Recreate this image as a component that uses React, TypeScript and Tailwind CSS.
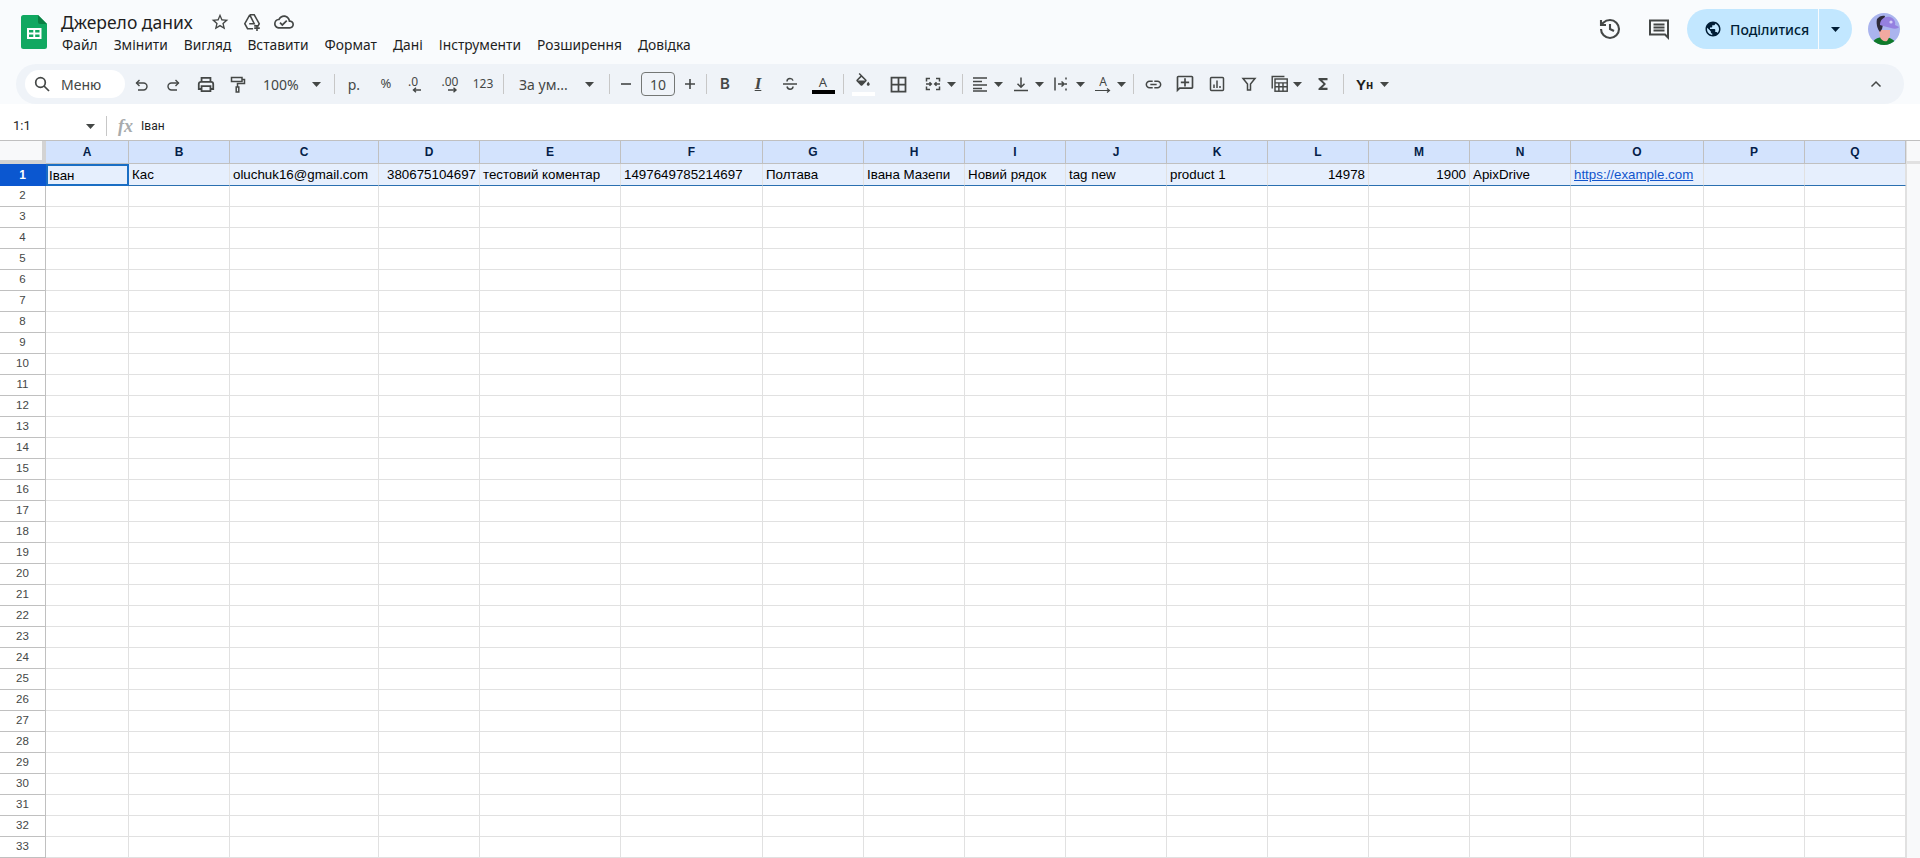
import React from "react";

const INK = "#444746";

function Caret({ color = INK }: { color?: string }) {
  return (
    <svg width="9" height="5" viewBox="0 0 9 5" className="shrink-0">
      <path d="M0 0h9L4.5 5z" fill={color} />
    </svg>
  );
}

function Ico({ d, size = 18, vb = 24 }: { d: string; size?: number; vb?: number }) {
  return (
    <svg width={size} height={size} viewBox={`0 0 ${vb} ${vb}`} className="shrink-0">
      <path d={d} fill={INK} />
    </svg>
  );
}

function Line({ children, size = 18, sw = 1.6 }: { children: React.ReactNode; size?: number; sw?: number }) {
  return (
    <svg width={size} height={size} viewBox="0 0 18 18" fill="none" stroke={INK} strokeWidth={sw} className="shrink-0">
      {children}
    </svg>
  );
}

function Sep({ className }: { className: string }) {
  return (
    <div className={`flex justify-center shrink-0 ${className}`}>
      <div className="w-px h-[20px] bg-[#c7c7c7]" />
    </div>
  );
}

function Slot({ className, children }: { className: string; children?: React.ReactNode }) {
  return <div className={`flex items-center justify-center shrink-0 h-full ${className}`}>{children}</div>;
}

function Logo() {
  return (
    <svg width="26" height="34" viewBox="0 0 26 34" className="shrink-0">
      <path d="M2.5 0H17l9 9v22.5a2.5 2.5 0 0 1-2.5 2.5h-21A2.5 2.5 0 0 1 0 31.5v-29A2.5 2.5 0 0 1 2.5 0z" fill="#11a861" />
      <path d="M17 0l9 9h-7a2 2 0 0 1-2-2z" fill="#0a8043" />
      <path d="M6 13h14.5v11H6z" fill="#fff" />
      <path d="M8 15h4.3v2.6H8zM14.2 15h4.3v2.6h-4.3zM8 19.4h4.3V22H8zM14.2 19.4h4.3V22h-4.3z" fill="#11a861" />
    </svg>
  );
}

function Avatar() {
  return (
    <svg width="32" height="32" viewBox="0 0 32 32" className="shrink-0">
      <defs>
        <clipPath id="av"><circle cx="16" cy="16" r="16" /></clipPath>
      </defs>
      <g clipPath="url(#av)">
        <rect width="32" height="32" fill="#aab4ee" />
        <path d="M4 32c1-6 6-8 12-8s11 3 13 8z" fill="#0f7a2a" />
        <path d="M11 17h11v6l-3 5c-3 1-6-1-7-4z" fill="#f2a9a0" />
        <path d="M9 6c2-3 6-4 8-3l-3 13-2 3c-3-3-4-9-3-13z" fill="#2e2a3a" />
        <path d="M12 12c0-6 5-9 10-8 4 1 6 5 5 8l4 2c-1 2-5 2-8 1-4-1-8-2-11-3z" fill="#9580e0" />
        <circle cx="23" cy="9" r="1.6" fill="#d8d0f8" />
      </g>
    </svg>
  );
}

const MENU = ["Файл", "Змінити", "Вигляд", "Вставити", "Формат", "Дані", "Інструменти", "Розширення", "Довідка"];

const COLS: { l: string; w: string; v?: string; k?: "r" | "a" }[] = [
  { l: "A", w: "w-[83px]", v: "Іван" },
  { l: "B", w: "w-[101px]", v: "Кас" },
  { l: "C", w: "w-[149px]", v: "oluchuk16@gmail.com" },
  { l: "D", w: "w-[101px]", v: "380675104697", k: "r" },
  { l: "E", w: "w-[141px]", v: "тестовий коментар" },
  { l: "F", w: "w-[142px]", v: "1497649785214697" },
  { l: "G", w: "w-[101px]", v: "Полтава" },
  { l: "H", w: "w-[101px]", v: "Івана Мазепи" },
  { l: "I", w: "w-[101px]", v: "Новий рядок" },
  { l: "J", w: "w-[101px]", v: "tag new" },
  { l: "K", w: "w-[101px]", v: "product 1" },
  { l: "L", w: "w-[101px]", v: "14978", k: "r" },
  { l: "M", w: "w-[101px]", v: "1900", k: "r" },
  { l: "N", w: "w-[101px]", v: "ApixDrive" },
  { l: "O", w: "w-[133px]", v: "https://example.com", k: "a" },
  { l: "P", w: "w-[101px]" },
  { l: "Q", w: "w-[101px]" },
];

const ROWS = Array.from({ length: 32 }, (_, i) => i + 2);

export default function App() {
  return (
    <div className="w-[1920px] h-[858px] overflow-hidden bg-white flex flex-col font-['Noto_Sans',sans-serif] text-[#1f1f1f]">
      {/* Top chrome */}
      <div className="h-[104px] bg-[#f9fbfd] flex flex-col shrink-0">
        <div className="h-[64px] flex shrink-0 relative">
          <div className="pl-[21px] pt-[15px] shrink-0"><Logo /></div>
          <div className="pl-[14px] flex flex-col shrink-0">
            <div className="h-[24px] mt-[10px] flex items-center">
              <span className="text-[17.5px] leading-[24px] w-[149px] shrink-0 whitespace-nowrap">Джерело даних</span>
              <Slot className="w-[20px] ml-[0px]">
                <Ico size={20} d="M22 9.24l-7.19-.62L12 2 9.19 8.63 2 9.24l5.46 4.73L5.82 21 12 17.27 18.18 21l-1.63-7.03L22 9.24zM12 15.4l-3.76 2.27 1-4.28-3.32-2.88 4.38-.38L12 6.1l1.71 4.04 4.38.38-3.32 2.88 1 4.28L12 15.4z" />
              </Slot>
              <Slot className="w-[20px] ml-[12px]">
                <Line size={20} sw={1.4}>
                  <path d="M7 2.5h4l4.5 8-1 2H11M7 2.5L2.5 10.5l2.5 4.5h5M7 2.5l4 8H6.5" />
                  <path d="M13.5 12v5M11 14.5h5" />
                </Line>
              </Slot>
              <Slot className="w-[20px] ml-[12px]">
                <Ico size={20} d="M19.35 10.04C18.67 6.59 15.64 4 12 4 9.11 4 6.6 5.64 5.35 8.04 2.34 8.36 0 10.91 0 14c0 3.31 2.69 6 6 6h13c2.76 0 5-2.24 5-5 0-2.64-2.05-4.78-4.65-4.96zM19 18H6c-2.21 0-4-1.79-4-4 0-2.05 1.53-3.76 3.56-3.97l1.07-.11.5-.95C8.08 7.14 9.94 6 12 6c2.62 0 4.88 1.86 5.39 4.43l.3 1.5 1.53.11c1.56.1 2.78 1.41 2.78 2.96 0 1.65-1.35 3-3 3zm-9-3.82l-2.09-2.09L6.5 13.5 10 17l6.01-6.01-1.41-1.41z" />
              </Slot>
            </div>
            <div className="flex gap-[16px] mt-[1px] text-[13.8px] leading-[20px] pl-[1px] whitespace-nowrap">
              {MENU.map((m) => (
                <span key={m}>{m}</span>
              ))}
            </div>
          </div>
          <div className="flex-1" />
          <div className="flex items-center h-[40px] mt-[9px] shrink-0">
            <Slot className="w-[24px]">
              <svg width="24" height="24" viewBox="0 0 24 24" fill="none" stroke={INK} strokeWidth="2.1">
                <path d="M3 12a9 9 0 1 0 9-9 9.75 9.75 0 0 0-6.74 2.74L3 8" />
                <path d="M3 3v5h5" />
                <path d="M12 7v5l4 2" />
              </svg>
            </Slot>
            <Slot className="w-[24px] ml-[25px]">
              <svg width="24" height="24" viewBox="0 0 24 24" fill="none" stroke={INK} strokeWidth="2">
                <path d="M3 3.5h18v17l-3-3H3z" />
                <path d="M6.5 7.5h11M6.5 10.5h11M6.5 13.5h11" />
              </svg>
            </Slot>
            <div className="ml-[16px] w-[165px] h-[40px] rounded-full bg-[#c2e7ff] flex items-center text-[#001d35] shrink-0">
              <div className="w-[132px] h-full flex items-center border-r border-[#f9fbfd] shrink-0 pl-[17px]">
                <svg width="18" height="18" viewBox="0 0 24 24" className="shrink-0">
                  <path fill="#001d35" d="M12 2C6.48 2 2 6.48 2 12s4.48 10 10 10 10-4.48 10-10S17.52 2 12 2zm-1 17.93c-3.95-.49-7-3.85-7-7.93 0-.62.08-1.21.21-1.79L9 15v1c0 1.1.9 2 2 2v1.93zm6.9-2.54c-.26-.81-1-1.39-1.9-1.39h-1v-3c0-.55-.45-1-1-1H8v-2h2c.55 0 1-.45 1-1V7h2c1.1 0 2-.9 2-2v-.41c2.93 1.19 5 4.06 5 7.41 0 2.08-.8 3.97-2.1 5.39z" />
                </svg>
                <span className="ml-[8px] text-[14px] font-medium whitespace-nowrap">Поділитися</span>
              </div>
              <div className="flex-1 flex justify-center"><Caret color="#001d35" /></div>
            </div>
            <div className="ml-[16px] mr-[20px] shrink-0"><Avatar /></div>
          </div>
        </div>

        {/* Toolbar */}
        <div className="h-[40px] ml-[16px] w-[1888px] rounded-[20px] bg-[#eff3f8] flex items-center text-[#444746] text-[14px] shrink-0">
          <div className="ml-[9px] w-[100px] h-[28px] rounded-full bg-white flex items-center shrink-0">
            <div className="ml-[8px]">
              <Line size={18} sw={1.7}><circle cx="7.5" cy="7.5" r="4.8" /><path d="M11 11l5 5" /></Line>
            </div>
            <span className="ml-[10px]">Меню</span>
          </div>
          <Slot className="ml-[1px] w-[32px]">
            <Line size={18} sw={1.4}><path d="M6.5 5L3.5 8l3 3" /><path d="M3.5 8h7a3.5 3.5 0 0 1 0 7H5" /></Line>
          </Slot>
          <Slot className="w-[30px]">
            <Line size={18} sw={1.4}><path d="M11.5 5l3 3-3 3" /><path d="M14.5 8H7.5a3.5 3.5 0 0 0 0 7H13" /></Line>
          </Slot>
          <Slot className="w-[36px]">
            <Line size={20} sw={1.6}><path d="M5 7V3.5h8V7" /><path d="M5 13.5H2.5V9a2 2 0 0 1 2-2h9a2 2 0 0 1 2 2v4.5H13" /><path d="M5 11h8v4.5H5z" /></Line>
          </Slot>
          <Slot className="w-[28px]">
            <Line size={18} sw={1.5}><path d="M2.5 2.5h10.5v4H2.5z" /><path d="M13 4.5h2.5v4H8.5v3.5" /><path d="M7.2 12h2.6v5H7.2z" /></Line>
          </Slot>
          <div className="w-[75px] h-full flex items-center shrink-0 pl-[11px]">
            <span className="w-[49px]">100%</span>
            <Caret />
          </div>
          <Sep className="w-[14px]" />
          <Slot className="w-[26px]"><span>р.</span></Slot>
          <Slot className="w-[38px]"><span className="text-[13px]">%</span></Slot>
          <Slot className="w-[26px]">
            <div className="flex flex-col leading-none items-start">
              <span className="text-[12px] leading-[13px] -ml-[2px]">.0</span>
              <svg width="14" height="6" viewBox="0 0 14 6" className="-mt-[1px] ml-[2px]"><path d="M1 3h8M4 .8L1.5 3 4 5.2" fill="none" stroke={INK} strokeWidth="1.4" /></svg>
            </div>
          </Slot>
          <Slot className="w-[38px]">
            <div className="flex flex-col leading-none items-end">
              <span className="text-[12px] leading-[13px]">.00</span>
              <svg width="14" height="6" viewBox="0 0 14 6" className="-mt-[1px]"><path d="M4 3h8M9.5 .8L12 3 9.5 5.2" fill="none" stroke={INK} strokeWidth="1.4" /></svg>
            </div>
          </Slot>
          <Slot className="w-[28px]"><span className="text-[12px]">123</span></Slot>
          <Sep className="w-[12px]" />
          <div className="w-[94px] h-full flex items-center shrink-0 pl-[10px]">
            <span className="w-[66px] whitespace-nowrap">За ум...</span>
            <Caret />
          </div>
          <Sep className="w-[12px]" />
          <Slot className="w-[22px]">
            <Line size={18}><path d="M4 9h10" /></Line>
          </Slot>
          <div className="ml-[4px] w-[34px] h-[24px] rounded-[4px] border border-[#747775] flex items-center justify-center shrink-0">10</div>
          <Slot className="w-[29px]">
            <Line size={18}><path d="M4 9h10M9 4v10" /></Line>
          </Slot>
          <Sep className="w-[4px]" />
          <Slot className="w-[34px]"><span className="font-semibold text-[15px] font-['Inter',sans-serif]">B</span></Slot>
          <Slot className="w-[32px]"><span className="italic font-bold text-[17px] underline font-['Liberation_Serif',serif]">I</span></Slot>
          <Slot className="w-[32px]">
            <Line size={18} sw={1.5}><path d="M2 9h14" /><path d="M6 6.5C6 4.7 7.3 3.6 9 3.6c1.5 0 2.6.7 3 2" /><path d="M6 11.5c.4 1.7 1.5 2.7 3 2.7 1.7 0 3-1 3-2.7" /></Line>
          </Slot>
          <Slot className="w-[34px]">
            <div className="flex flex-col items-center w-[23px]">
              <span className="text-[13px] leading-[16px]">A</span>
              <div className="w-[23px] h-[4px] bg-black" />
            </div>
          </Slot>
          <Sep className="w-[6px]" />
          <Slot className="w-[34px]">
            <div className="flex flex-col items-center w-[23px]">
              <Ico size={18} d="M16.56 8.94L7.62 0 6.21 1.41l2.38 2.38-5.15 5.15c-.59.59-.59 1.54 0 2.12l5.5 5.5c.29.29.68.44 1.06.44s.77-.15 1.06-.44l5.5-5.5c.59-.58.59-1.53 0-2.12zM5.21 10L10 5.21 14.79 10H5.21zM19 11.5s-2 2.17-2 3.5c0 1.1.9 2 2 2s2-.9 2-2c0-1.33-2-3.5-2-3.5z" />
              <div className="w-[23px] h-[4px] bg-white mt-[1px]" />
            </div>
          </Slot>
          <Slot className="w-[36px]">
            <Ico size={21} d="M3 3v18h18V3H3zm8 16H5v-6h6v6zm0-8H5V5h6v6zm8 8h-6v-6h6v6zm0-8h-6V5h6v6z" />
          </Slot>
          <div className="w-[42px] h-full flex items-center justify-end gap-[5px] pr-[2px] shrink-0">
            <Line size={18} sw={1.5}>
              <path d="M6 3.5H2.5v3M2.5 11.5v3H6M12 3.5h3.5v3M15.5 11.5v3H12" />
              <path d="M2 9h5M5.5 7.3L7.3 9l-1.8 1.7M16 9h-5M12.5 7.3L10.7 9l1.8 1.7" />
            </Line>
            <Caret />
          </div>
          <Sep className="w-[8px]" />
          <div className="w-[44px] h-full flex items-center gap-[5px] pl-[5px] shrink-0">
            <Line size={18} sw={1.4}><path d="M2 3h14M2 6.5h9M2 10h14M2 13.5h9M2 16h14" /></Line>
            <Caret />
          </div>
          <div className="w-[41px] h-full flex items-center gap-[5px] pl-[2px] shrink-0">
            <Line size={18} sw={1.5}><path d="M9 2.5v9.5M5.5 8.8L9 12.3l3.5-3.5" /><path d="M2 15.5h14" /></Line>
            <Caret />
          </div>
          <div className="w-[41px] h-full flex items-center gap-[6px] pl-[1px] shrink-0">
            <Line size={18} sw={1.5}><path d="M3 2.5v13M14 2.5v2M14 8v2M14 13.5v2" /><path d="M6 9h6M9.5 6.5L12.2 9l-2.7 2.5" /></Line>
            <Caret />
          </div>
          <div className="w-[37px] h-full flex items-center gap-[6px] pl-[3px] shrink-0">
            <div className="flex flex-col items-center w-[16px]">
              <span className="text-[12px] leading-[13px]">A</span>
              <svg width="16" height="5" viewBox="0 0 16 5"><path d="M0 2.5h14M12 .5l2.5 2L12 4.5" fill="none" stroke={INK} strokeWidth="1.2" /></svg>
            </div>
            <Caret />
          </div>
          <Sep className="w-[8px]" />
          <Slot className="w-[32px]">
            <Ico size={19} d="M3.9 12c0-1.71 1.39-3.1 3.1-3.1h4V7H7c-2.76 0-5 2.24-5 5s2.24 5 5 5h4v-1.9H7c-1.71 0-3.1-1.39-3.1-3.1zM8 13h8v-2H8v2zm9-6h-4v1.9h4c1.71 0 3.1 1.39 3.1 3.1s-1.39 3.1-3.1 3.1h-4V17h4c2.76 0 5-2.24 5-5s-2.24-5-5-5z" />
          </Slot>
          <Slot className="w-[32px]">
            <svg width="20" height="20" viewBox="0 0 24 24" className="shrink-0">
              <g transform="translate(24,0) scale(-1,1)">
                <path fill={INK} d="M22 4c0-1.1-.9-2-2-2H4c-1.1 0-2 .9-2 2v12c0 1.1.9 2 2 2h14l4 4V4zm-2 13.17L18.83 16H4V4h16v13.17zM13 5h-2v4H7v2h4v4h2v-4h4V9h-4z" />
              </g>
            </svg>
          </Slot>
          <Slot className="w-[32px]">
            <Line size={18} sw={1.5}><rect x="2.5" y="2.5" width="13" height="13" rx="1" /><path d="M6 13V9.5M9 13V5.5M12 13v-2" /></Line>
          </Slot>
          <Slot className="w-[32px]">
            <Line size={18} sw={1.5}><path d="M3 3.5h12L10.5 9v6h-3V9z" /></Line>
          </Slot>
          <div className="w-[43px] h-full flex items-center justify-center gap-[3px] shrink-0 pr-[1px]">
            <Line size={20} sw={1.3}><rect x="4.5" y="4.5" width="11" height="11" /><path d="M2 13V2.2h11M4.5 8h11M4.5 11.5h11M8 8v7.5M11.7 8v7.5" /></Line>
            <Caret />
          </div>
          <Slot className="w-[30px]">
            <Ico size={18} d="M18 4H6v2l6.5 6L6 18v2h12v-3h-7l5-5-5-5h7z" />
          </Slot>
          <Sep className="w-[10px]" />
          <div className="h-full flex items-center shrink-0 pl-[8px] text-[#1f1f1f]">
            <span className="font-bold text-[15px] leading-none font-['Liberation_Sans',sans-serif]">Y</span>
            <span className="font-bold text-[12px] leading-none font-['Liberation_Sans',sans-serif] mt-[2px]">н</span>
            <div className="ml-[7px]"><Caret /></div>
          </div>
          <div className="flex-1" />
          <div className="mr-[19px]">
            <Line size={18} sw={1.5}><path d="M4.5 11.5L9 7l4.5 4.5" /></Line>
          </div>
        </div>
      </div>

      {/* Formula bar */}
      <div className="h-[36px] bg-white flex items-center shrink-0 text-[#1f1f1f] pt-[8px]">
        <span className="ml-[13px] w-[73px] text-[13px] font-['Roboto',sans-serif]">1:1</span>
        <Caret />
        <div className="ml-[11px] w-px h-[20px] bg-[#c7c7c7]" />
        <span className="ml-[11px] w-[23px] text-[18px] italic font-bold text-[#a8abad] leading-none font-['Liberation_Serif',serif]">fx</span>
        <span className="text-[12px] font-['Roboto',sans-serif]">Іван</span>
      </div>

      {/* Grid */}
      <div className="flex-1 flex flex-col overflow-hidden font-['Liberation_Sans',Arial,sans-serif] bg-[#f8f9fa]">
        {/* Column headers */}
        <div className="h-[24px] flex shrink-0 border-t border-[#c0c0c0]">
          <div className="w-[46px] h-full shrink-0 bg-[#f8f9fa] border-r-4 border-b-4 border-[#d3d3d3]" />
          {COLS.map((c) => (
            <div key={c.l} className={`${c.w} h-full shrink-0 bg-[#d3e3fd] border-r border-b border-[#c0c0c0] flex items-center justify-center text-[12px] font-bold text-[#041e49]`}>
              {c.l}
            </div>
          ))}
          <div className="flex-1 border-l border-[#e1e1e1] border-b-[3px] border-b-[#e1e1e1]" />
        </div>
        {/* Row 1 */}
        <div className="h-[22px] flex shrink-0">
          <div className="w-[46px] h-full shrink-0 bg-[#0b57d0] flex items-center justify-center text-[12px] font-bold text-white pr-[1px]">1</div>
          {COLS.map((c, i) => (
            <div
              key={c.l}
              className={`${c.w} h-full shrink-0 bg-[#e6effd] flex items-center text-[13.33px] text-black whitespace-nowrap overflow-hidden pt-[1px] ${
                i === 0 ? "border-2 border-[#1a6ec4] pl-[1px]" : "border-r border-b border-r-[#e1e1e1] border-b-[#2a6fb0] pl-[3px]"
              } ${c.k === "r" ? "justify-end pr-[3px]" : ""}`}
            >
              {c.k === "a" ? <span className="underline text-[#1155cc]">{c.v}</span> : c.v}
            </div>
          ))}
          <div className="flex-1 border-l border-[#e1e1e1]" />
        </div>
        {/* Remaining rows */}
        {ROWS.map((r) => (
          <div key={r} className="h-[21px] flex shrink-0">
            <div className="w-[46px] h-full shrink-0 bg-white border-r border-b border-[#c0c0c0] flex items-center justify-center text-[11.5px] text-[#444746]">
              {r}
            </div>
            {COLS.map((c) => (
              <div key={c.l} className={`${c.w} h-full shrink-0 bg-white border-r border-b border-[#e1e1e1]`} />
            ))}
            <div className="flex-1 border-l border-[#e1e1e1]" />
          </div>
        ))}
      </div>
    </div>
  );
}
